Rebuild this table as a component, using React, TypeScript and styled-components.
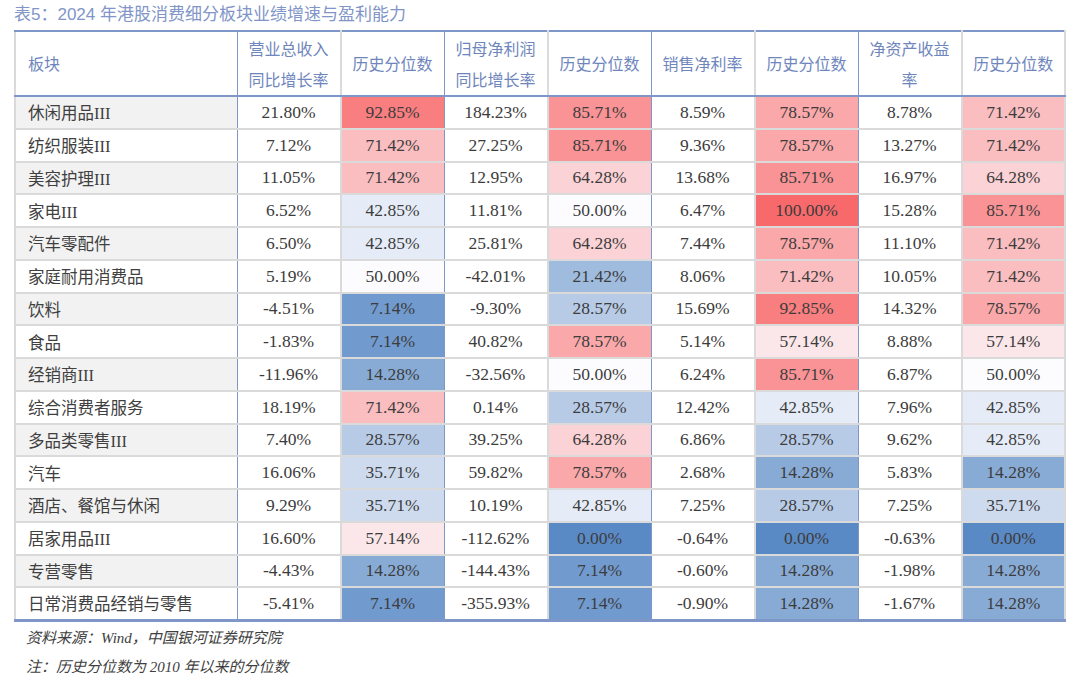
import React from 'react';
import styled, { createGlobalStyle } from 'styled-components';

type Row = [string, string, number, string, number, string, number, string, number];

const rows: Row[] = [
  ['休闲用品III', '21.80%', 92.85, '184.23%', 85.71, '8.59%', 78.57, '8.78%', 71.42],
  ['纺织服装III', '7.12%', 71.42, '27.25%', 85.71, '9.36%', 78.57, '13.27%', 71.42],
  ['美容护理III', '11.05%', 71.42, '12.95%', 64.28, '13.68%', 85.71, '16.97%', 64.28],
  ['家电III', '6.52%', 42.85, '11.81%', 50.0, '6.47%', 100.0, '15.28%', 85.71],
  ['汽车零配件', '6.50%', 42.85, '25.81%', 64.28, '7.44%', 78.57, '11.10%', 71.42],
  ['家庭耐用消费品', '5.19%', 50.0, '-42.01%', 21.42, '8.06%', 71.42, '10.05%', 71.42],
  ['饮料', '-4.51%', 7.14, '-9.30%', 28.57, '15.69%', 92.85, '14.32%', 78.57],
  ['食品', '-1.83%', 7.14, '40.82%', 78.57, '5.14%', 57.14, '8.88%', 57.14],
  ['经销商III', '-11.96%', 14.28, '-32.56%', 50.0, '6.24%', 85.71, '6.87%', 50.0],
  ['综合消费者服务', '18.19%', 71.42, '0.14%', 28.57, '12.42%', 42.85, '7.96%', 42.85],
  ['多品类零售III', '7.40%', 28.57, '39.25%', 64.28, '6.86%', 28.57, '9.62%', 42.85],
  ['汽车', '16.06%', 35.71, '59.82%', 78.57, '2.68%', 14.28, '5.83%', 14.28],
  ['酒店、餐馆与休闲', '9.29%', 35.71, '10.19%', 42.85, '7.25%', 28.57, '7.25%', 35.71],
  ['居家用品III', '16.60%', 57.14, '-112.62%', 0.0, '-0.64%', 0.0, '-0.63%', 0.0],
  ['专营零售', '-4.43%', 14.28, '-144.43%', 7.14, '-0.60%', 14.28, '-1.98%', 14.28],
  ['日常消费品经销与零售', '-5.41%', 7.14, '-355.93%', 7.14, '-0.90%', 14.28, '-1.67%', 14.28],
];

const headers = [
  '营业总收入同比增长率',
  '历史分位数',
  '归母净利润同比增长率',
  '历史分位数',
  '销售净利率',
  '历史分位数',
  '净资产收益率',
  '历史分位数',
];

// excel-like 3 colour scale: blue (0) -> white (50) -> red (100)
const WHITE = [252, 252, 255];
const RED = [248, 105, 107];
const BLUE = [90, 138, 198];

const scaleColor = (p: number) => {
  const target = p >= 50 ? RED : BLUE;
  const t = Math.abs(p - 50) / 50;
  const c = WHITE.map((w, i) => Math.round(w + (target[i] - w) * t));
  return `rgb(${c[0]}, ${c[1]}, ${c[2]})`;
};

const BLUE_LINE = '#7f96c8';
const GRAY_LINE = '#dadada';

const GlobalStyle = createGlobalStyle`
  html, body {
    margin: 0;
    padding: 0;
    background: #ffffff;
  }
`;

const Page = styled.div`
  width: 1080px;
  height: 682px;
  padding-left: 14px;
  box-sizing: border-box;
  background: #fff;
  overflow: hidden;
`;

const Title = styled.div`
  height: 30px;
  line-height: 29px;
  font-family: 'Liberation Sans', 'Noto Sans CJK SC', sans-serif;
  font-size: 17px;
  color: #8195c8;
  white-space: nowrap;
`;

const Table = styled.table`
  width: 1050px;
  table-layout: fixed;
  border-collapse: collapse;
  border-top: 2px solid ${BLUE_LINE};
  border-bottom: 3px solid ${BLUE_LINE};
  border-left: 2px solid ${GRAY_LINE};
  border-right: 2px solid ${GRAY_LINE};
`;

const HeadRow = styled.tr`
  height: 65px;
`;

const HeadCell = styled.th<{ $groupEnd?: boolean; $left?: boolean }>`
  padding: 0 ${({ $left }) => ($left ? '0 0 12px' : '10px')};
  font-family: 'Noto Sans CJK SC', sans-serif;
  font-size: 16px;
  font-weight: 400;
  line-height: 31px;
  color: #6f86bd;
  text-align: ${({ $left }) => ($left ? 'left' : 'center')};
  vertical-align: middle;
  border-bottom: 2px solid ${BLUE_LINE};
  border-right: ${({ $groupEnd }) =>
    $groupEnd ? `1.5px solid ${BLUE_LINE}` : `2px solid ${GRAY_LINE}`};
`;

const BodyRow = styled.tr`
  height: 32.75px;
`;

const NameCell = styled.td<{ $shade?: boolean }>`
  padding: 0 0 0 12px;
  font-family: 'Liberation Serif', 'Noto Sans CJK SC', serif;
  font-size: 16.5px;
  color: #404040;
  white-space: nowrap;
  background: ${({ $shade }) => ($shade ? '#f2f2f2' : '#ffffff')};
  border-bottom: 2px solid ${GRAY_LINE};
  border-right: 1.5px solid ${BLUE_LINE};
`;

const ValueCell = styled.td<{ $groupEnd?: boolean; $bg?: string }>`
  padding: 0;
  text-align: center;
  font-family: 'Liberation Serif', 'Noto Sans CJK SC', serif;
  font-size: 17.5px;
  color: #3c3c3c;
  white-space: nowrap;
  background: ${({ $bg }) => $bg || '#ffffff'};
  border-bottom: 2px solid ${GRAY_LINE};
  border-right: ${({ $groupEnd }) =>
    $groupEnd ? `1.5px solid ${BLUE_LINE}` : `2px solid ${GRAY_LINE}`};
`;

const Notes = styled.div`
  padding: 2px 0 0 12px;
  font-family: 'Liberation Serif', 'Noto Sans CJK SC', serif;
  font-style: italic;
  font-size: 15px;
  line-height: 29px;
  color: #404040;
`;

const App: React.FC = () => {
  return (
    <Page>
      <GlobalStyle />
      <Title>表5：2024 年港股消费细分板块业绩增速与盈利能力</Title>
      <Table>
        <colgroup>
          <col style={{ width: 222 }} />
          {headers.map((_, i) => (
            <col key={i} style={{ width: 103.5 }} />
          ))}
        </colgroup>
        <thead>
          <HeadRow>
            <HeadCell $left $groupEnd>
              板块
            </HeadCell>
            {headers.map((h, i) => (
              <HeadCell key={i} $groupEnd={i % 2 === 1 && i < 7}>
                {h}
              </HeadCell>
            ))}
          </HeadRow>
        </thead>
        <tbody>
          {rows.map((r, ri) => (
            <BodyRow key={r[0]}>
              <NameCell $shade={ri % 2 === 0}>{r[0]}</NameCell>
              {r.slice(1).map((v, ci) =>
                ci % 2 === 0 ? (
                  <ValueCell key={ci}>{v as string}</ValueCell>
                ) : (
                  <ValueCell
                    key={ci}
                    $groupEnd={ci < 7}
                    $bg={scaleColor(v as number)}
                  >
                    {(v as number).toFixed(2)}%
                  </ValueCell>
                )
              )}
            </BodyRow>
          ))}
        </tbody>
      </Table>
      <Notes>
        资料来源：Wind，中国银河证券研究院
        <br />
        注：历史分位数为 2010 年以来的分位数
      </Notes>
    </Page>
  );
};

export default App;
